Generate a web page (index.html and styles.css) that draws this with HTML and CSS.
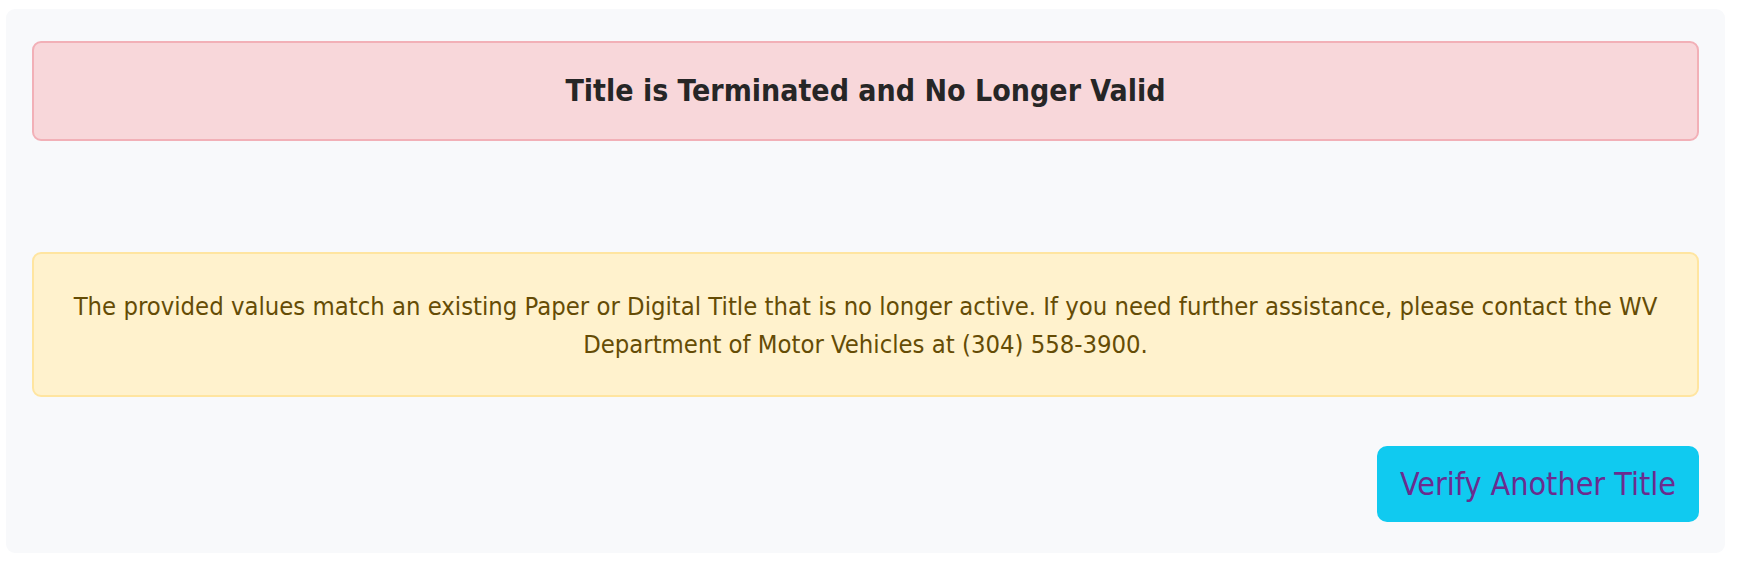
FILE: index.html
```html
<!DOCTYPE html>
<html lang="en">
<head>
<meta charset="utf-8">
<title>Title Verification</title>
<link rel="stylesheet" href="styles.css">
</head>
<body>
<div class="card">
  <div class="alert alert-danger">
    <h2 class="alert-title">Title is Terminated and No Longer Valid</h2>
  </div>
  <div class="alert alert-warning">
    <p class="alert-text">The provided values match an existing Paper or Digital Title that is no longer active. If you need further assistance, please contact the WV Department of Motor Vehicles at (304) 558-3900.</p>
  </div>
  <div class="actions">
    <a class="btn-info" href="#">Verify Another Title</a>
  </div>
</div>
</body>
</html>
```

FILE: styles.css
```css
html, body {
  background: #ffffff;
}
body {
  margin: 0;
  padding: 9px 17px 15px 6px;
  font-family: "DejaVu Sans Condensed", "DejaVu Sans", sans-serif;
}
.card {
  background: #f8f9fb;
  border-radius: 9px;
  padding: 32px 26px 31px;
}
.alert {
  border-radius: 9px;
  box-sizing: border-box;
}
.alert-danger {
  background: #f8d7da;
  border: 2px solid #f2b0b7;
  height: 100px;
  display: flex;
  align-items: center;
  justify-content: center;
}
.alert-title {
  margin: 0;
  font-size: 30px;
  font-weight: bold;
  color: #262626;
  line-height: 1.2;
}
.alert-warning {
  margin-top: 111px;
  background: #fff2cd;
  border: 2px solid #ffe5a0;
  height: 145px;
  padding: 0 20px;
  display: flex;
  align-items: center;
  justify-content: center;
}
.alert-text {
  margin: 0;
  text-align: center;
  font-size: 25.4px;
  line-height: 38px;
  color: #654c05;
}
.actions {
  margin-top: 49px;
  display: flex;
  justify-content: flex-end;
}
.btn-info {
  display: flex;
  align-items: center;
  justify-content: center;
  height: 76px;
  width: 322px;
  box-sizing: border-box;
  background: #10caf0;
  border-radius: 10px;
  color: #6b2c8f;
  text-decoration: none;
  font-size: 32px;
}
```
